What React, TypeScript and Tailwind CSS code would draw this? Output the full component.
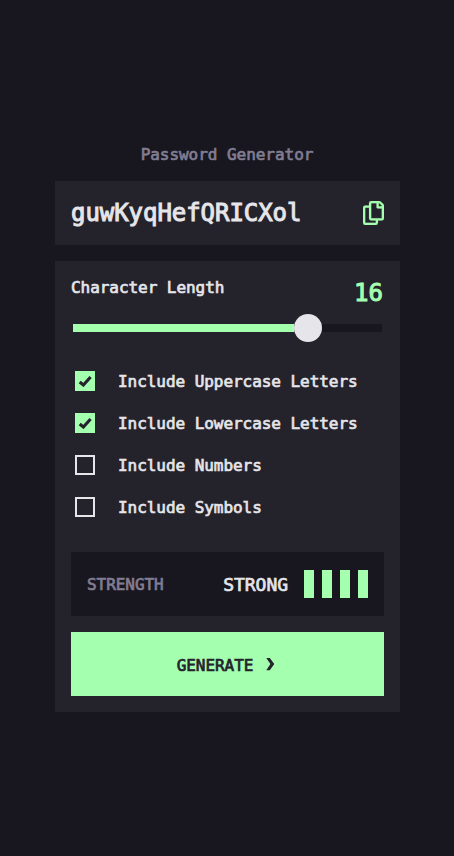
import React, { useState } from "react";

const options = [
  "Include Uppercase Letters",
  "Include Lowercase Letters",
  "Include Numbers",
  "Include Symbols",
];

function CopyIcon() {
  return (
    <svg width="21" height="24" viewBox="0 0 21 24" fill="#a4ffaf" stroke="#a4ffaf" strokeWidth="0.15">
      <path d="M20.341 3.091 17.909.659A2.25 2.25 0 0 0 16.319 0H8.25A2.25 2.25 0 0 0 6 2.25V4.5H2.25A2.25 2.25 0 0 0 0 6.75v15A2.25 2.25 0 0 0 2.25 24h10.5A2.25 2.25 0 0 0 15 21.75V19.5h3.75A2.25 2.25 0 0 0 21 17.25V4.682a2.25 2.25 0 0 0-.659-1.591ZM12.469 21.75H2.53a.281.281 0 0 1-.281-.281V7.03a.281.281 0 0 1 .281-.281H6v10.5a2.25 2.25 0 0 0 2.25 2.25h4.5v1.969a.282.282 0 0 1-.281.281Zm6-4.5H8.53a.281.281 0 0 1-.281-.281V2.53a.281.281 0 0 1 .281-.281H13.5v4.125c0 .621.504 1.125 1.125 1.125h4.125v9.469a.282.282 0 0 1-.281.281Zm.281-12h-3v-3h.451c.075 0 .147.03.2.082L18.667 4.6a.283.283 0 0 1 .082.199v.451Z" />
    </svg>
  );
}

export default function App() {
  const [checked, setChecked] = useState([true, true, false, false]);
  const toggle = (i: number) => setChecked(checked.map((c, j) => (j === i ? !c : c)));

  return (
    <main className="flex min-h-screen flex-col items-center bg-[#18171f] pt-[143px] font-['DejaVu_Sans_Mono',monospace] text-base text-[#e6e5ea] [-webkit-text-stroke:0.7px_currentColor]">
      <h1 className="h-[38px] leading-6 tracking-[-0.04px] text-[#817d92]">Password Generator</h1>

      <section className="mb-4 ml-px flex h-16 w-[345px] items-center justify-between bg-[#24232c] px-4">
        <span className="text-2xl tracking-[-0.05px] [-webkit-text-stroke-width:1px]">guwKyqHefQRICXol</span>
        <button aria-label="Copy">
          <CopyIcon />
        </button>
      </section>

      <section className="ml-px flex h-[451px] w-[345px] flex-col bg-[#24232c] p-4">
        <div className="flex h-[37px] justify-between">
          <span className="leading-[21px] tracking-[-0.05px]">Character Length</span>
          <span className="mr-px text-2xl leading-[33px] text-[#a4ffaf] [-webkit-text-stroke-width:1px]">16</span>
        </div>

        <div className="mx-0.5 flex h-7 items-center">
          <div className="h-2 w-[221px] bg-[#a4ffaf]" />
          <div className="size-7 rounded-full bg-[#e6e5ea]" />
          <div className="h-2 flex-1 bg-[#18171f]" />
        </div>

        <div className="mt-[29px] flex flex-col gap-[22px] pl-1">
          {options.map((label, i) => (
            <button
              key={label}
              role="checkbox"
              aria-checked={checked[i]}
              onClick={() => toggle(i)}
              className="flex h-5 items-center gap-[23px] text-left"
            >
              <span
                className={
                  checked[i]
                    ? "flex size-5 items-center justify-center bg-[#a4ffaf]"
                    : "size-5 border-2 border-[#e6e5ea]"
                }
              >
                {checked[i] && (
                  <svg width="14" height="12" viewBox="0 0 14 12" fill="none">
                    <path d="M1.7 7 5.4 10 12.6 2" stroke="#24232c" strokeWidth="3.1" />
                  </svg>
                )}
              </span>
              <span className="pt-0.5 tracking-[-0.05px]">{label}</span>
            </button>
          ))}
        </div>

        <div className="mt-[35px] flex h-16 items-center bg-[#18171f] px-4">
          <span className="pt-0.5 tracking-[-0.05px] text-[#817d92]">STRENGTH</span>
          <span className="mr-4 ml-auto pt-0.5 text-lg tracking-[-0.037px]">STRONG</span>
          <div className="flex gap-2">
            <span className="h-7 w-2.5 bg-[#a4ffaf]" />
            <span className="h-7 w-2.5 bg-[#a4ffaf]" />
            <span className="h-7 w-2.5 bg-[#a4ffaf]" />
            <span className="h-7 w-2.5 bg-[#a4ffaf]" />
          </div>
        </div>

        <button className="mt-4 flex h-16 items-center justify-center bg-[#a4ffaf] pr-[3px] text-[#24232c]">
          <span className="mr-[13px] pt-1 tracking-[-0.05px]">GENERATE</span>
          <svg width="9" height="13" viewBox="0 0 9 13" fill="currentColor">
            <path d="M.3 0H3.8L8.3 6 3.8 12.2H.3L4.4 6Z" />
          </svg>
        </button>
      </section>
    </main>
  );
}
